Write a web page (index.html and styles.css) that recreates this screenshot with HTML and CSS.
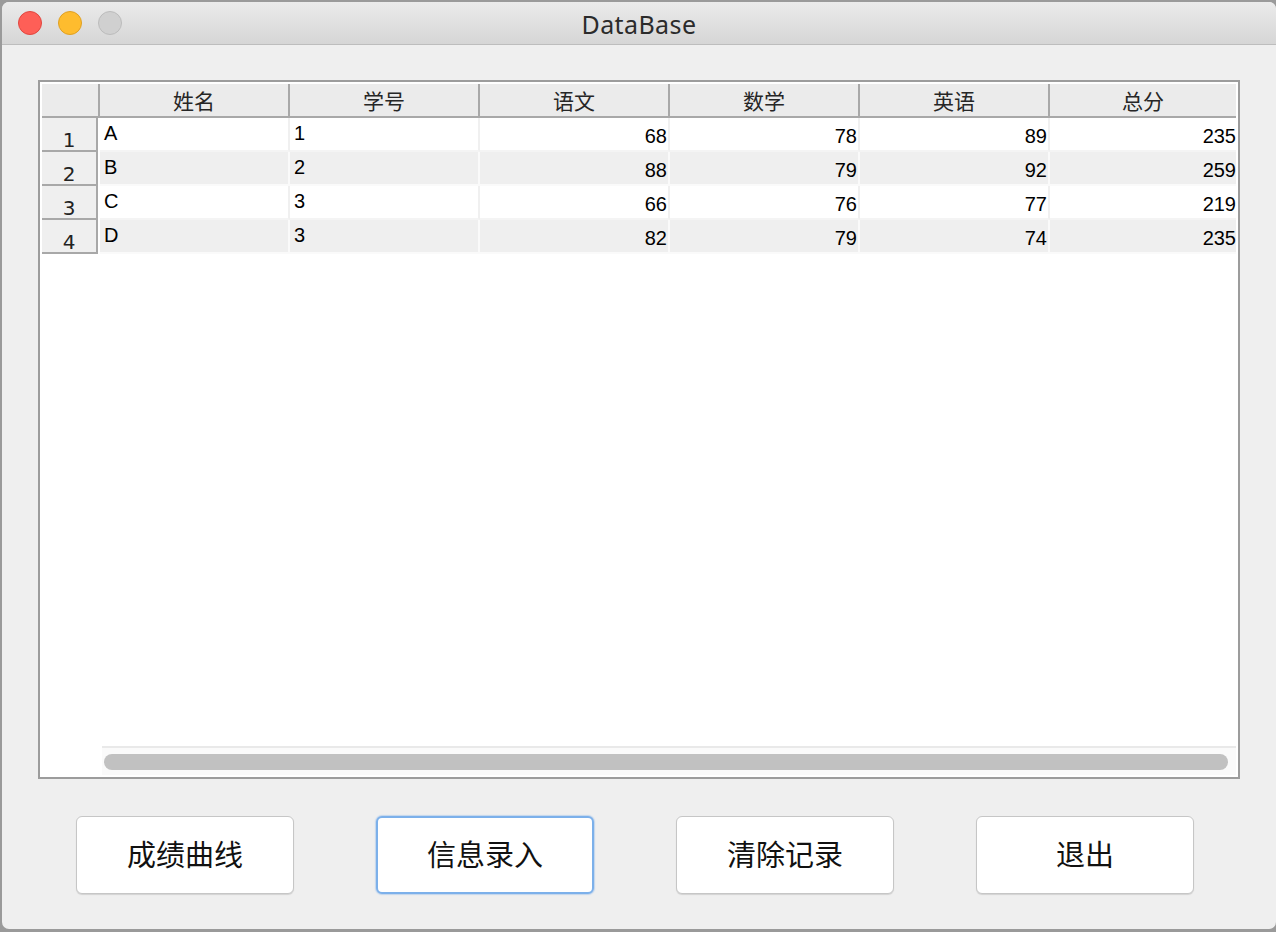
FILE: index.html
```html
<!DOCTYPE html>
<html lang="zh">
<head>
<meta charset="utf-8">
<title>DataBase</title>
<link rel="stylesheet" href="styles.css">
</head>
<body>
<div class="window">
  <div class="titlebar">
    <div class="lights">
      <span class="light red"></span>
      <span class="light yellow"></span>
      <span class="light grey"></span>
    </div>
    <div class="title">DataBase</div>
  </div>
  <div class="content">
    <div class="table">
      <div class="grid">
        <div class="hcell corner"></div>
        <div class="hcell">姓名</div>
        <div class="hcell">学号</div>
        <div class="hcell">语文</div>
        <div class="hcell">数学</div>
        <div class="hcell">英语</div>
        <div class="hcell last">总分</div>

        <div class="rh">1</div>
        <div class="cell t">A</div><div class="cell t">1</div>
        <div class="cell n">68</div><div class="cell n">78</div><div class="cell n">89</div><div class="cell n last">235</div>

        <div class="rh">2</div>
        <div class="cell t alt">B</div><div class="cell t alt">2</div>
        <div class="cell n alt">88</div><div class="cell n alt">79</div><div class="cell n alt">92</div><div class="cell n alt last">259</div>

        <div class="rh">3</div>
        <div class="cell t">C</div><div class="cell t">3</div>
        <div class="cell n">66</div><div class="cell n">76</div><div class="cell n">77</div><div class="cell n last">219</div>

        <div class="rh">4</div>
        <div class="cell t alt">D</div><div class="cell t alt">3</div>
        <div class="cell n alt">82</div><div class="cell n alt">79</div><div class="cell n alt">74</div><div class="cell n alt last">235</div>
      </div>
      <div class="filler"></div>
      <div class="hscroll">
        <div class="hscroll-pad"></div>
        <div class="track"><div class="thumb"></div></div>
      </div>
    </div>
    <div class="buttons">
      <button class="btn">成绩曲线</button>
      <button class="btn focus">信息录入</button>
      <button class="btn">清除记录</button>
      <button class="btn">退出</button>
    </div>
  </div>
</div>
</body>
</html>
```
FILE: styles.css
```css
html, body {
  margin: 0;
  padding: 0;
}
body {
  width: 1276px;
  height: 932px;
  background: #9a9a9a;
  overflow: hidden;
  font-family: "Liberation Sans", "Noto Sans CJK SC", sans-serif;
}
.window {
  margin: 2px 0 0 2px;
  width: 1274px;
  height: 927px;
  background: #efefef;
  border-radius: 7px;
  overflow: hidden;
  display: flex;
  flex-direction: column;
}
.titlebar {
  height: 42px;
  flex: none;
  display: flex;
  align-items: center;
  position: relative;
  background: linear-gradient(#ebebeb, #d6d6d6);
  border-bottom: 1px solid #bdbdbd;
}
.lights {
  display: flex;
  gap: 16px;
  padding-left: 16px;
}
.light {
  width: 24px;
  height: 24px;
  border-radius: 50%;
  box-sizing: border-box;
}
.red { background: #fe5f57; border: 1px solid #e1463f; }
.yellow { background: #febc2e; border: 1px solid #dfa023; }
.grey { background: #d0d0d0; border: 1px solid #bcbcbc; }
.title {
  position: absolute;
  left: 0;
  right: 0;
  top: 6px;
  text-align: center;
  font-family: "Noto Sans", "Liberation Sans", sans-serif;
  font-size: 25px;
  line-height: 32px;
  color: #2b2b2b;
  letter-spacing: 0.4px;
}
.content {
  flex: 1;
  display: flex;
  flex-direction: column;
  padding: 35px 0 0 36px;
}
.table {
  width: 1202px;
  height: 699px;
  border: 2px solid #9c9c9c;
  background: #fff;
  padding: 2px;
  box-sizing: border-box;
  display: flex;
  flex-direction: column;
}
.grid {
  display: grid;
  grid-template-columns: 58px 190px 190px 190px 190px 190px 186px;
  grid-auto-rows: 34px;
}
.hcell {
  background: #ebebeb;
  border-right: 2px solid #a8a8a8;
  border-bottom: 2px solid #a8a8a8;
  font-family: "Noto Sans CJK SC", sans-serif;
  font-size: 21px;
  line-height: 32px;
  color: #262626;
  text-align: center;
}
.hcell.last { border-right: none; }
.rh {
  background: #efefef;
  margin-right: 2px;
  border-right: 2px solid #a8a8a8;
  border-bottom: 2px solid #a8a8a8;
  font-family: "DejaVu Sans", sans-serif;
  font-size: 20px;
  line-height: 22px;
  color: #222;
  text-align: center;
  padding-top: 11px;
  box-sizing: border-box;
}
.cell {
  background: #fff;
  border-right: 2px solid #f0f0f0;
  border-bottom: 2px solid #f4f4f4;
  font-size: 20px;
  color: #000;
  box-sizing: border-box;
  white-space: nowrap;
}
.cell.alt {
  background: #efefef;
  border-right-color: #fafafa;
  border-bottom-color: #fafafa;
}
.cell.last { border-right: none; }
.cell.t {
  padding: 4px 0 0 4px;
  line-height: 22px;
}
.cell.n {
  text-align: right;
  padding: 7px 1px 0 0;
  line-height: 22px;
}
.cell.n.last { padding-right: 0; }
.filler { flex: 1; }
.hscroll {
  display: flex;
  height: 29px;
}
.hscroll-pad { width: 60px; }
.track {
  flex: 1;
  background: #fafafa;
  border-top: 2px solid #e9e9e9;
  padding: 6px 8px 0 2px;
  box-sizing: border-box;
}
.thumb {
  height: 16px;
  border-radius: 8px;
  background: #c1c1c1;
}
.buttons {
  display: flex;
  gap: 82px;
  padding: 37px 0 0 38px;
}
.btn {
  width: 218px;
  height: 78px;
  background: #fff;
  border: 1px solid #c6c6c6;
  border-radius: 6px;
  box-shadow: 0 1px 1px rgba(0, 0, 0, 0.12);
  font-family: "Noto Sans CJK SC", sans-serif;
  font-size: 29px;
  font-weight: 400;
  color: #111;
  padding: 0 0 5px 0;
  margin: 0;
}
.btn.focus {
  border: 2px solid #7cb0ea;
  box-shadow: 0 0 1px 1px rgba(124, 176, 234, 0.4);
}
```
